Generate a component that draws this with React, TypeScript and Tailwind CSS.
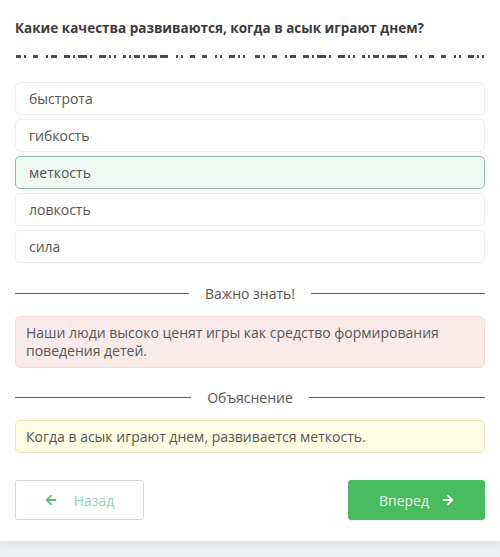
import { FaArrowLeft, FaArrowRight } from "react-icons/fa";

const OPTIONS = ["быстрота", "гибкость", "меткость", "ловкость", "сила"];
const SELECTED = "меткость";

// blurred answer placeholder, one half of the repeating dash pattern
const DASH_WORDS = [
  [5, 2],
  [5],
  [2, 6],
  [6, 2, 9, 2],
  [7, 2, 2],
  [3, 2, 6, 2, 9, 8],
  [2, 2],
  [5],
  [5],
  [2, 2],
  [6, 2, 2],
];

function DashHalf() {
  return (
    <div className="flex flex-1 justify-between">
      {DASH_WORDS.map((word, i) => (
        <div key={i} className="flex gap-[3px]">
          {word.map((w, j) => (
            <span key={j} className="h-[3px] bg-[#4a4a4a]" style={{ width: w }} />
          ))}
        </div>
      ))}
    </div>
  );
}

function Divider({ label }: { label: string }) {
  return (
    <div className="flex items-center gap-4">
      <div className="h-px flex-1 bg-[#5f5f5f]" />
      <span className="text-[14px] text-[#555]">{label}</span>
      <div className="h-px flex-1 bg-[#5f5f5f]" />
    </div>
  );
}

export default function App() {
  return (
    <div className="w-[500px] h-[557px] bg-[#eef0f1] font-['Open_Sans',sans-serif] overflow-hidden">
      <div className="bg-white px-[15px] pt-[18px] pb-[21px] shadow-[0_2px_8px_rgba(0,0,0,0.08)]">
        <h1 className="text-[13.5px] font-bold text-[#3b3b3b] leading-[20px]">
          Какие качества развиваются, когда в асык играют днем?
        </h1>
        <div className="flex gap-[10px] mt-[17px] pl-[1px] pr-[1px]">
          <DashHalf />
          <DashHalf />
        </div>

        <div className="flex flex-col gap-[4px] mt-[24px]">
          {OPTIONS.map((o) => (
            <div
              key={o}
              className={
                o === SELECTED
                  ? "h-[33px] flex items-center px-[13px] rounded-[5px] border border-[#8dbcaa] bg-[#edf9f2] text-[14px] text-[#555]"
                  : "h-[33px] flex items-center px-[13px] rounded-[5px] border border-[#eceeef] bg-white text-[14px] text-[#555]"
              }
            >
              {o}
            </div>
          ))}
        </div>

        <div className="mt-[20px]">
          <Divider label="Важно знать!" />
        </div>
        <div className="mt-[12px] rounded-[5px] border border-[#f2dcdc] bg-[#fbeaea] px-[10px] py-[7px] text-[14px] leading-[18px] text-[#555]">
          Наши люди высоко ценят игры как средство формирования поведения детей.
        </div>

        <div className="mt-[19px]">
          <Divider label="Объяснение" />
        </div>
        <div className="mt-[12px] h-[33px] flex items-center rounded-[5px] border border-[#ebe8b8] bg-[#fdfde4] px-[10px] text-[14px] text-[#555]">
          Когда в асык играют днем, развивается меткость.
        </div>

        <div className="flex justify-between mt-[27px]">
          <button className="w-[129px] h-[40px] flex items-center justify-center gap-[17px] rounded-[3px] border border-[#cfd8dc] bg-white text-[14px] text-[#8fd3aa]">
            <FaArrowLeft size={12} className="text-[#52bd7f]" />
            Назад
          </button>
          <button className="w-[137px] h-[40px] flex items-center justify-center gap-[13px] rounded-[3px] bg-[#48bc5f] text-[14px] text-[#e8f6eb]">
            Вперед
            <FaArrowRight size={12} className="text-white" />
          </button>
        </div>
      </div>
    </div>
  );
}
